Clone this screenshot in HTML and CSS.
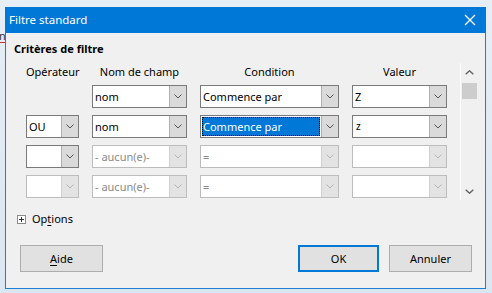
FILE: index.html
```html
<!DOCTYPE html>
<html lang="fr">
<head>
<meta charset="utf-8">
<title>Filtre standard</title>
<link rel="stylesheet" href="styles.css">
</head>
<body>
<span class="behind">n</span>
<div class="dialog">
  <div class="titlebar">
    <span class="title">Filtre standard</span>
    <svg class="close" width="12" height="12" viewBox="0 0 12 12"><path d="M1 1 L11 11 M11 1 L1 11" stroke="#fff" stroke-width="1.3" fill="none"/></svg>
  </div>
  <div class="content">
    <div class="section-title">Critères de filtre</div>
    <div class="panel">
      <div class="grid">
        <div class="head">Opérateur</div>
        <div class="head">Nom de champ</div>
        <div class="head">Condition</div>
        <div class="head">Valeur</div>

        <div class="empty"></div>
        <div class="combo"><span class="val">nom</span><span class="btn"><svg width="8" height="5" viewBox="0 0 8 5"><path d="M0.5 0.5 L4 4 L7.5 0.5" stroke="#555" fill="none"/></svg></span></div>
        <div class="combo"><span class="val">Commence par</span><span class="btn"><svg width="8" height="5" viewBox="0 0 8 5"><path d="M0.5 0.5 L4 4 L7.5 0.5" stroke="#555" fill="none"/></svg></span></div>
        <div class="combo"><span class="val">Z</span><span class="btn"><svg width="8" height="5" viewBox="0 0 8 5"><path d="M0.5 0.5 L4 4 L7.5 0.5" stroke="#555" fill="none"/></svg></span></div>

        <div class="combo"><span class="val">OU</span><span class="btn"><svg width="8" height="5" viewBox="0 0 8 5"><path d="M0.5 0.5 L4 4 L7.5 0.5" stroke="#555" fill="none"/></svg></span></div>
        <div class="combo"><span class="val">nom</span><span class="btn"><svg width="8" height="5" viewBox="0 0 8 5"><path d="M0.5 0.5 L4 4 L7.5 0.5" stroke="#555" fill="none"/></svg></span></div>
        <div class="combo"><span class="val sel">Commence par</span><span class="btn"><svg width="8" height="5" viewBox="0 0 8 5"><path d="M0.5 0.5 L4 4 L7.5 0.5" stroke="#555" fill="none"/></svg></span></div>
        <div class="combo"><span class="val small">z</span><span class="btn"><svg width="8" height="5" viewBox="0 0 8 5"><path d="M0.5 0.5 L4 4 L7.5 0.5" stroke="#555" fill="none"/></svg></span></div>

        <div class="combo"><span class="val"></span><span class="btn"><svg width="8" height="5" viewBox="0 0 8 5"><path d="M0.5 0.5 L4 4 L7.5 0.5" stroke="#555" fill="none"/></svg></span></div>
        <div class="combo off"><span class="val">- aucun(e)-</span><span class="btn"><svg width="8" height="5" viewBox="0 0 8 5"><path d="M0.5 0.5 L4 4 L7.5 0.5" stroke="#b5b5b5" fill="none"/></svg></span></div>
        <div class="combo off"><span class="val">=</span><span class="btn"><svg width="8" height="5" viewBox="0 0 8 5"><path d="M0.5 0.5 L4 4 L7.5 0.5" stroke="#b5b5b5" fill="none"/></svg></span></div>
        <div class="combo off"><span class="val"></span><span class="btn"><svg width="8" height="5" viewBox="0 0 8 5"><path d="M0.5 0.5 L4 4 L7.5 0.5" stroke="#b5b5b5" fill="none"/></svg></span></div>

        <div class="combo off"><span class="val"></span><span class="btn"><svg width="8" height="5" viewBox="0 0 8 5"><path d="M0.5 0.5 L4 4 L7.5 0.5" stroke="#b5b5b5" fill="none"/></svg></span></div>
        <div class="combo off"><span class="val">- aucun(e)-</span><span class="btn"><svg width="8" height="5" viewBox="0 0 8 5"><path d="M0.5 0.5 L4 4 L7.5 0.5" stroke="#b5b5b5" fill="none"/></svg></span></div>
        <div class="combo off"><span class="val">=</span><span class="btn"><svg width="8" height="5" viewBox="0 0 8 5"><path d="M0.5 0.5 L4 4 L7.5 0.5" stroke="#b5b5b5" fill="none"/></svg></span></div>
        <div class="combo off"><span class="val"></span><span class="btn"><svg width="8" height="5" viewBox="0 0 8 5"><path d="M0.5 0.5 L4 4 L7.5 0.5" stroke="#b5b5b5" fill="none"/></svg></span></div>
      </div>
      <div class="scrollbar">
        <svg class="arrow" width="9" height="5" viewBox="0 0 9 5"><path d="M0.7 4.3 L4.5 0.8 L8.3 4.3" stroke="#606060" stroke-width="1.4" fill="none"/></svg>
        <div class="thumb"></div>
        <div class="track"></div>
        <svg class="arrow" width="9" height="5" viewBox="0 0 9 5"><path d="M0.7 0.7 L4.5 4.2 L8.3 0.7" stroke="#606060" stroke-width="1.4" fill="none"/></svg>
      </div>
    </div>
    <div class="options">
      <svg class="plus" width="9" height="9" viewBox="0 0 9 9"><rect x="0.5" y="0.5" width="8" height="8" fill="#fff" stroke="#8a8a8a"/><path d="M2 4.5 H7 M4.5 2 V7" stroke="#333" fill="none"/></svg>
      <span>Op<u>t</u>ions</span>
    </div>
    <div class="buttons">
      <button class="button"><u>A</u>ide</button>
      <span class="spacer"></span>
      <button class="button default">OK</button>
      <button class="button">Annuler</button>
    </div>
  </div>
</div>
</body>
</html>
```

FILE: styles.css
```css
* { box-sizing: border-box; }
html, body { margin: 0; padding: 0; }
body {
  width: 492px;
  height: 293px;
  overflow: hidden;
  background: linear-gradient(to bottom, #e6eef6, #dae6f1);
  font-family: "Noto Sans", "Open Sans", sans-serif;
  font-size: 11px;
  color: #000;
  position: relative;
  padding-top: 7px;
  padding-left: 5px;
}
.behind {
  position: absolute;
  left: -1px;
  top: 30px;
  font-size: 11px;
  color: #333;
  border-bottom: 1px solid #c33;
  line-height: 12px;
}
.dialog {
  position: relative;
  width: 481px;
  height: 282px;
  background: #f0f0f0;
  border: 1px solid #1a7fd5;
  border-top: none;
  display: flex;
  flex-direction: column;
}
.titlebar {
  height: 26px;
  margin: 0 -1px;
  background: #0078d7;
  display: flex;
  align-items: center;
  padding-left: 4px;
  padding-right: 10px;
}
.title {
  color: #fff;
  font-size: 11.5px;
  line-height: 16px;
  flex: 1;
}
.close { display: block; }
.content {
  display: flex;
  flex-direction: column;
  flex: 1;
}
.section-title {
  margin-top: 8px;
  padding-left: 8px;
  font-weight: bold;
  line-height: 16px;
}
.panel {
  margin-top: 6px;
  height: 137px;
  display: flex;
  padding-left: 20px;
}
.grid {
  display: grid;
  grid-template-columns: 53px 95px 139px 95px;
  grid-template-rows: 14px repeat(4, 23px);
  column-gap: 13px;
  row-gap: 7px;
  padding-top: 1px;
  align-content: start;
}
.head {
  text-align: center;
  line-height: 16px;
  white-space: nowrap;
}
.combo {
  display: flex;
  border: 1px solid #7a7a7a;
  background: #fff;
  height: 23px;
}
.val {
  flex: 1;
  min-width: 0;
  line-height: 21px;
  padding-left: 2px;
  white-space: nowrap;
  overflow: hidden;
}
.val.sel {
  background: #0078d7;
  color: #fff;
  margin: 1px;
  line-height: 19px;
  padding-left: 1px;
  outline: 1px dotted #000;
  outline-offset: -1px;
}
.val.small { font-size: 10px; padding-left: 3px; }
.btn {
  width: 17px;
  background: #dadada;
  border-left: 1px solid #b0b0b0;
  display: flex;
  align-items: center;
  justify-content: center;
}
.combo.off { border-color: #bdbdbd; }
.combo.off .val { color: #8a8a8a; }
.combo.off .btn {
  background: #e3e3e3;
  border-left-color: #d0d0d0;
}
.scrollbar {
  margin-left: 13px;
  width: 17px;
  border-left: 1px solid #fbfbfb;
  display: flex;
  flex-direction: column;
  align-items: center;
  padding-top: 7px;
  padding-bottom: 6px;
}
.arrow { display: block; }
.thumb {
  margin-top: 8px;
  width: 15px;
  height: 16px;
  background: #cdcdcd;
}
.track { flex: 1; }
.options {
  margin-top: 11px;
  padding-left: 11px;
  display: flex;
  align-items: center;
  line-height: 16px;
  gap: 6px;
}
.plus { display: block; }
.options u { text-decoration-thickness: 1px; text-underline-offset: 2px; }
.buttons {
  margin-top: 18px;
  display: flex;
  padding: 0 13px 0 14px;
}
.spacer { flex: 1; }
.button {
  font-family: inherit;
  font-size: 11px;
  color: #000;
  height: 27px;
  width: 83px;
  background: #e1e1e1;
  border: 1px solid #adadad;
  padding: 0;
  line-height: 25px;
}
.button.default {
  width: 81px;
  margin-right: 10px;
  border: 2px solid #0078d7;
  line-height: 23px;
}
.button u { text-underline-offset: 2px; }
```
